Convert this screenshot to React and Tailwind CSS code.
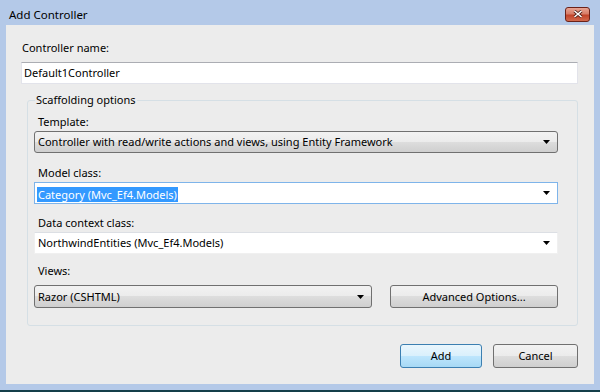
import React from 'react';

const font = { fontFamily: '"Noto Sans", "Liberation Sans", sans-serif' };

const Arrow = () => (
  <svg width="7" height="4" viewBox="0 0 7 4" className="shrink-0">
    <polygon points="0,0 7,0 3.5,4" fill="#000" />
  </svg>
);

const Label = ({ children, className = '' }) => (
  <div className={`h-[16px] leading-[16px] text-[11px] text-black ${className}`}>{children}</div>
);

const SelectBox = ({ text, className = '' }) => (
  <div
    className={`flex items-center h-[22px] pl-[3px] pr-[7px] rounded-[3px] border border-[#707070] bg-[linear-gradient(#f2f2f2_0%,#ebebeb_50%,#dddddd_50%,#cfcfcf_100%)] ${className}`}
  >
    <span className="flex-1 text-[11px] leading-[16px] text-black truncate">{text}</span>
    <Arrow />
  </div>
);

export default function App() {
  return (
    <div className="w-[600px] h-[392px] flex flex-col bg-[#b4c9e8] overflow-hidden select-none" style={font}>
      {/* title bar */}
      <div className="h-[25px] flex items-center shrink-0 pl-[9px] pr-[10px]">
        <span className="flex-1 text-[11.5px] leading-[16px] text-black mt-[5px]">Add Controller</span>
        <div className="w-[25px] h-[15px] mt-[3px] rounded-[3px] border border-[#6b2219] bg-[linear-gradient(#e8a493_0%,#d77d68_45%,#c2442a_55%,#d26a4e_100%)] flex items-center justify-center">
          <svg width="10" height="8" viewBox="0 0 10 8">
            <path d="M1.5 1 L8.5 7 M8.5 1 L1.5 7" stroke="#4a1a12" strokeWidth="3" />
            <path d="M1.5 1 L8.5 7 M8.5 1 L1.5 7" stroke="#fff" strokeWidth="1.6" />
          </svg>
        </div>
      </div>

      {/* client */}
      <div className="mx-[6px] flex-1 bg-[#ececec] flex flex-col">
        <Label className="ml-[16px] mt-[15px]">Controller name:</Label>
        <div className="ml-[15px] mt-[6px] w-[557px] h-[22px] bg-white border border-[#e2e3ea] border-t-[#abadb3] flex items-center pl-[2px]">
          <span className="text-[11px] leading-[16px] text-black">Default1Controller</span>
        </div>

        <fieldset className="ml-[21px] mt-[8px] w-[551px] h-[234px] border border-[#d5dfe5] rounded-[3px] pl-[6px] pr-[19px]">
          <legend className="ml-[1px] px-[1px] text-[11px] leading-[16px] text-black">Scaffolding options</legend>

          <Label className="ml-[4px] mt-[6px]">Template:</Label>
          <SelectBox className="mt-[1px]" text="Controller with read/write actions and views, using Entity Framework" />

          <Label className="ml-[4px] mt-[12px]">Model class:</Label>
          <div className="mt-[1px] h-[22px] bg-white border border-[#7eb4ea] flex items-center pl-[2px] pr-[7px]">
            <span className="flex-1">
              <span className="bg-[#3399ff] text-white text-[11px] leading-[16px] px-[1px]">Category (Mvc_Ef4.Models)</span>
            </span>
            <Arrow />
          </div>

          <Label className="ml-[4px] mt-[11px]">Data context class:</Label>
          <div className="mt-[1px] h-[22px] bg-white border border-[#f0f0f0] border-t-[#dcdfe4] flex items-center pl-[3px] pr-[7px]">
            <span className="flex-1 text-[11px] leading-[16px] text-black">NorthwindEntities (Mvc_Ef4.Models)</span>
            <Arrow />
          </div>

          <Label className="ml-[4px] mt-[9px]">Views:</Label>
          <div className="mt-[6px] flex">
            <SelectBox className="w-[338px] h-[23px]" text="Razor (CSHTML)" />
            <div className="ml-[18px] flex-1 h-[23px] rounded-[3px] border border-[#707070] bg-[linear-gradient(#f2f2f2_0%,#ebebeb_50%,#dddddd_50%,#cfcfcf_100%)] flex items-center justify-center text-[11px] leading-[16px] text-black">
              Advanced Options...
            </div>
          </div>
        </fieldset>

        <div className="mt-[18px] flex justify-end pr-[16px] gap-[11px]">
          <div className="w-[82px] h-[24px] rounded-[3px] border border-[#3c7fb1] bg-[linear-gradient(#eaf6fd_0%,#d9f0fc_50%,#bee6fd_50%,#a7d9f5_100%)] flex items-center justify-center text-[11px] leading-[16px] text-black">
            Add
          </div>
          <div className="w-[85px] h-[24px] rounded-[3px] border border-[#707070] bg-[linear-gradient(#f2f2f2_0%,#ebebeb_50%,#dddddd_50%,#cfcfcf_100%)] flex items-center justify-center text-[11px] leading-[16px] text-black">
            Cancel
          </div>
        </div>
      </div>

      <div className="h-[6px] shrink-0" />
      <div className="h-[2px] shrink-0 bg-[#143f4a]" />
    </div>
  );
}
